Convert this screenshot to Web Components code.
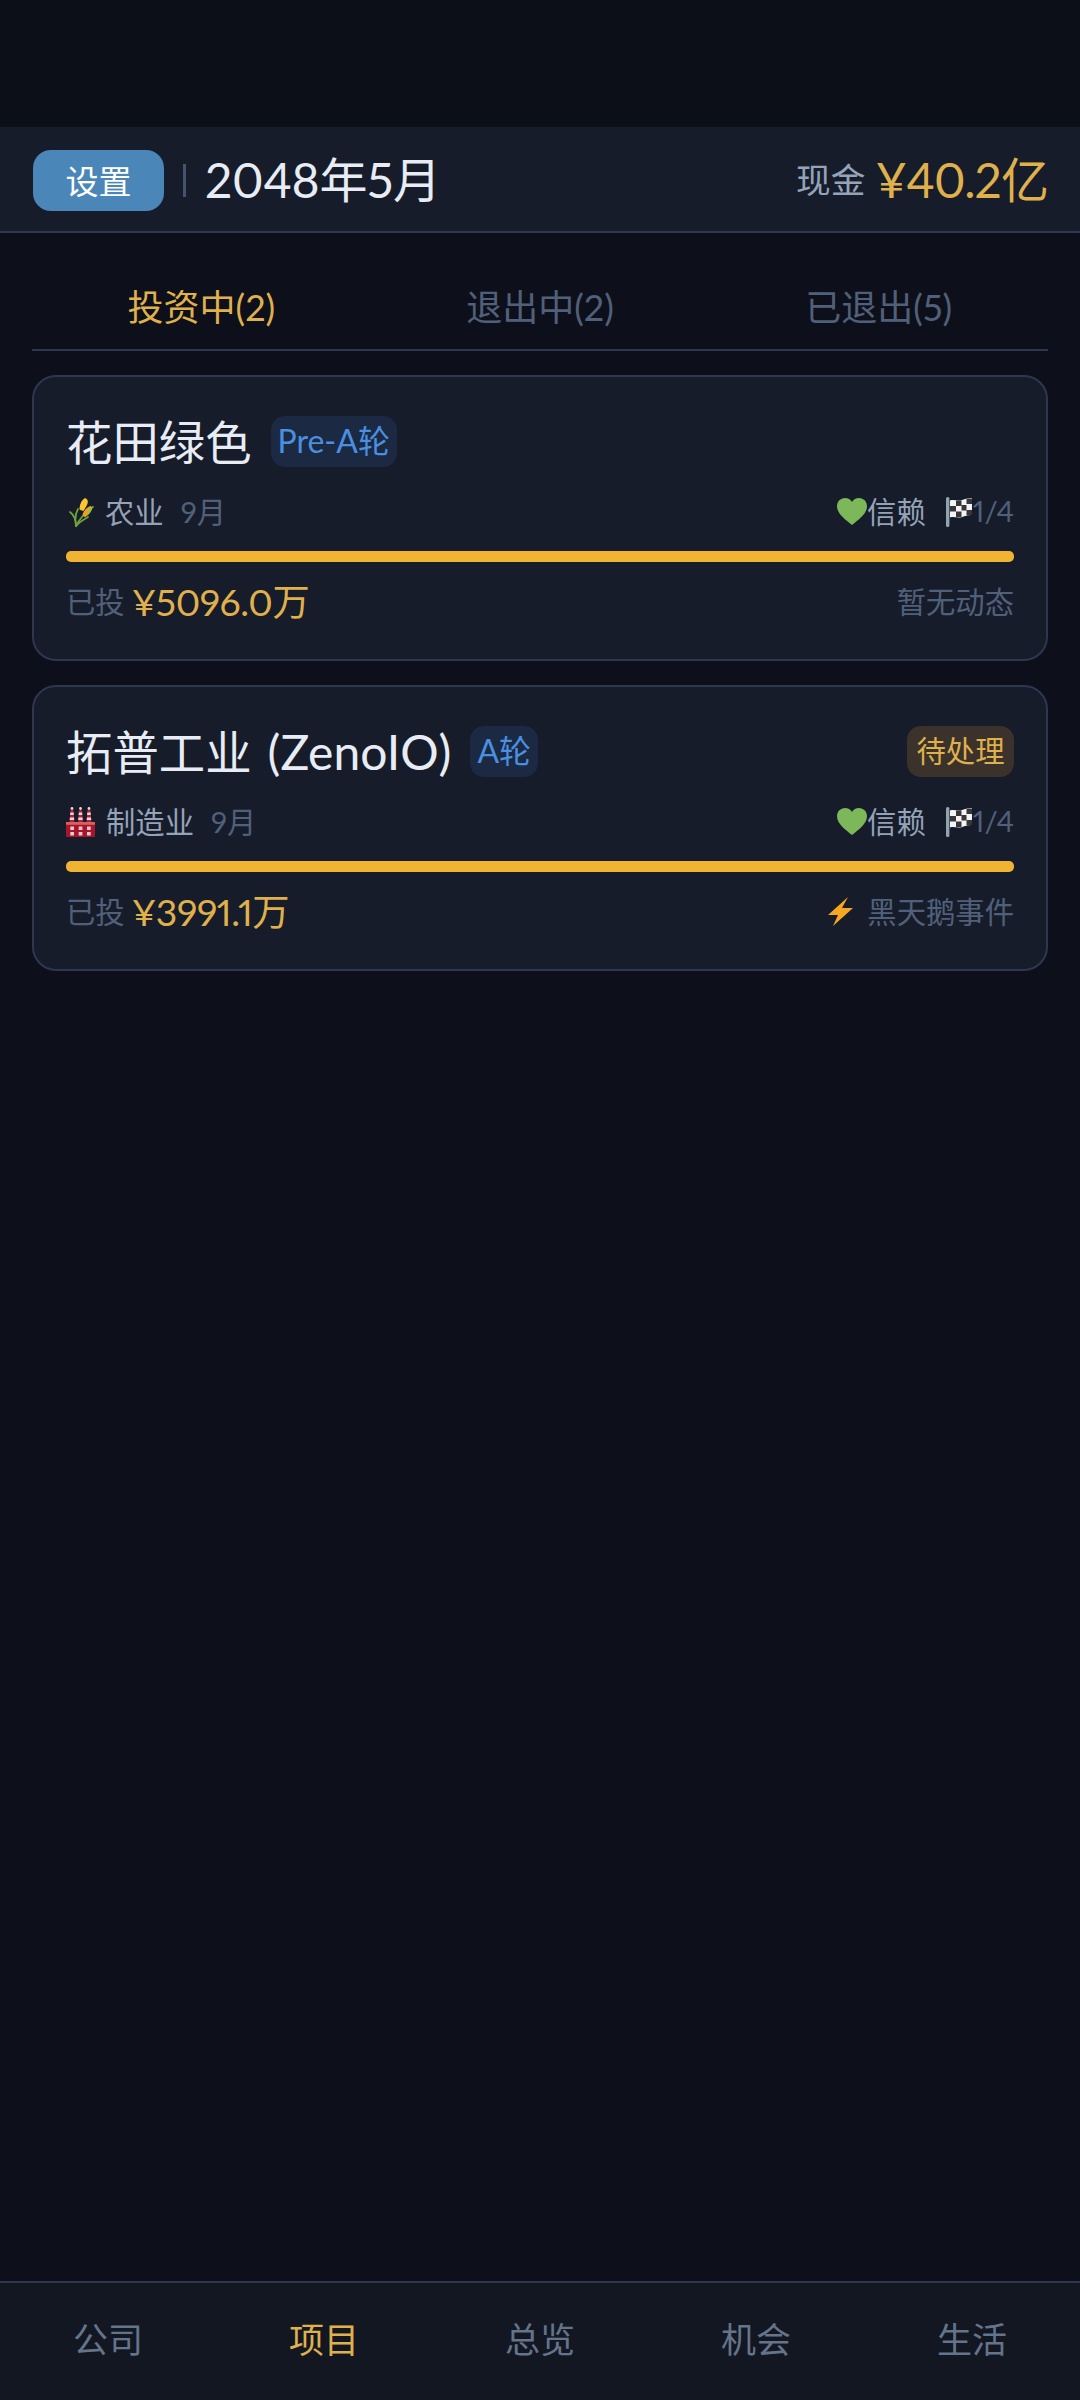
<!DOCTYPE html>
<html lang="zh-CN"><head><meta charset="utf-8"><title>项目</title>
<style>
html,body{margin:0;background:#0d101a;}
body{font-family:Lato,"Noto Sans CJK SC",sans-serif;}
x-app{width:1080px;height:2400px;}
</style></head><body>
<x-app>
  <x-header slot="header" date="2048年5月" cash="¥40.2亿"></x-header>
  <x-tabs slot="tabs" items="投资中(2),退出中(2),已退出(5)" active="0"></x-tabs>
  <x-card name="花田绿色" round="Pre-A轮" icon="corn" industry="农业" months="9月" amount="¥5096.0万" note="暂无动态"></x-card>
  <x-card name="拓普工业" latin="(ZenoIO)" round="A轮" pending="待处理" icon="factory" industry="制造业" months="9月" amount="¥3991.1万" note="黑天鹅事件" bolt></x-card>
  <x-nav slot="nav" items="公司,项目,总览,机会,生活" active="1"></x-nav>
</x-app>
<script>
const ICONS={
corn:`<svg width="28" height="30" viewBox="-4 0 28 30"><g fill="none" stroke="#6fa53a" stroke-width="1.700" stroke-linecap="round"><path d="M6 29C6 23 4 18 0 15"/><path d="M6 29C5 23 5 17 8 12"/><path d="M6 29C9 23 13 17 23 10"/><path d="M6 29C9 25 13 23 18 20"/></g><path d="M15 1c3 1 3.500 4 2 7l-3.500 6c-2-.5-3.500-1-4-2 0-4 2-9 5.500-11z" fill="#fbc531"/><path d="M21 9c1.500 2 1 4-.5 6l-5 5c-1.500 0-2.500-1-3-2 1-4 4-8 8.500-9z" fill="#f0a020"/><path d="M23 9l-3 7-3 3 2-7z" fill="#8bc34a"/></svg>`,
factory:`<svg width="29" height="30" viewBox="0 0 29 30"><g fill="#e8d5d5"><circle cx="6" cy="1.500" r="1.400"/><circle cx="14.500" cy="1.500" r="1.400"/><circle cx="23" cy="1.500" r="1.400"/></g><path d="M4.500 3h3l1 13h-5zM13 3h3l1 13h-5zM21.500 3h3l1 13h-5z" fill="#b5203a"/><path d="M4.300 5.500h3.400v2.400H4.100zM3.900 10.500h4.200v2.400H3.700zM12.800 5.500h3.400v2.400h-3.600zM12.400 10.500h4.200v2.400h-4.400zM21.300 5.500h3.400v2.400h-3.600zM20.900 10.500h4.200v2.400h-4.400z" fill="#eed7d7"/><rect x="0" y="15" width="29" height="15" rx="1" fill="#a8142c"/><rect x="0" y="15" width="29" height="2.800" fill="#d8605f"/><g fill="#eec9c9"><rect x="4.300" y="19.500" width="3.700" height="3.500"/><rect x="12.700" y="19.500" width="3.700" height="3.500"/><rect x="21" y="19.500" width="3.700" height="3.500"/><rect x="4.300" y="25" width="3.700" height="3.500"/><rect x="12.700" y="25" width="3.700" height="3.500"/><rect x="21" y="25" width="3.700" height="3.500"/></g></svg>`,
heart:`<svg width="30" height="27" viewBox="0 0 30 27"><path d="M15 27C9 22 0 16 0 8.200 0 3.600 3.500 0 8 0c3 0 5.600 1.600 7 4 1.400-2.400 4-4 7-4 4.500 0 8 3.600 8 8.200C30 16 21 22 15 27z" fill="#7cb85a"/></svg>`,
flag:`<svg width="26" height="30" viewBox="0 0 26 30"><rect x="0" y="0" width="3.400" height="30" rx="1.500" fill="#90a4ae"/><path d="M4 3.500C8 2 12 4.500 16 3c3-1 5-2 10-2v17c-5 0-7 1-10 2-4 1.500-8-1-12 .5z" fill="#f4f4f4"/><g fill="#37373b"><rect x="10" y="3.500" width="5.500" height="5.500"/><rect x="20.500" y="1.500" width="5.500" height="5.500"/><rect x="4" y="9" width="6" height="5.500"/><rect x="15.500" y="8" width="5" height="5.500"/><rect x="10" y="14.500" width="5.500" height="5.500"/><rect x="20.500" y="13" width="5.500" height="5"/></g></svg>`,
bolt:`<svg width="25" height="29" viewBox="0 0 25 29"><path d="M20 0L0 18h10L5 29 25 11H14z" fill="#f5a623"/></svg>`
};
class Base extends HTMLElement{
  constructor(){super();this.attachShadow({mode:'open'});}
  connectedCallback(){this.shadowRoot.innerHTML=this.render();}
}
customElements.define('x-app',class extends Base{render(){return `<style>
:host{display:flex;flex-direction:column;background:#0d101a;color:#e8ecf4;font-family:Lato,"Noto Sans CJK SC",sans-serif;font-variant-numeric:proportional-nums;}
.status{height:127px;background:#0c0f18;flex:none}
main{flex:1;display:flex;flex-direction:column;gap:24px;padding:0 32px;}
.nav{flex:none}
</style><div class="status"></div><slot name="header"></slot><main><slot name="tabs"></slot><slot></slot></main><div class="nav"><slot name="nav"></slot></div>`}});
customElements.define('x-header',class extends Base{render(){return `<style>
:host{display:flex;align-items:center;height:106px;box-sizing:border-box;border-bottom:2px solid #2f3650;background:#161c2a;padding:0 32px 0 33px;}
button{all:unset;width:131px;height:61px;border-radius:18px;background:#4a86b8;color:#fff;font-size:33px;text-align:center;line-height:58px;margin-top:3px}
.div{width:3px;height:33px;background:#46536d;margin:2px 19px 0 19px;}
.date{font-size:48px;color:#e8ecf4;line-height:60px;margin-top:2px;letter-spacing:-.3px}
.cash{margin-left:auto;display:flex;align-items:center;gap:10px;line-height:60px;margin-top:2px}
.l{font-size:34.670px;color:#94a3b8;}
.v{font-size:48px;color:#dfb04c;letter-spacing:-.9px}
</style><button>设置</button><span class="div"></span><span class="date">${this.getAttribute('date')}</span><span class="cash"><span class="l">现金</span><span class="v">${this.getAttribute('cash')}</span></span>`}});
customElements.define('x-tabs',class extends Base{render(){const a=+this.getAttribute('active');return `<style>
:host{display:flex;height:118px;box-sizing:border-box;border-bottom:2px solid #2f3650;}
span{flex:1;text-align:center;font-size:36px;line-height:44px;padding-top:52px;color:#51607a;}
.on{color:#dfb04c}
</style>`+this.getAttribute('items').split(',').map((t,i)=>`<span class="${i==a?'on':''}">${t}</span>`).join('')}});
customElements.define('x-card',class extends Base{render(){const g=n=>this.getAttribute(n);return `<style>
:host{display:block;box-sizing:border-box;height:286px;border:2px solid #2f3650;border-radius:24px;background:#161c2a;padding:39px 32px 0;}
.top{display:flex;align-items:center;height:52px;}
.name{font-size:46.400px;color:#e8ecf4;line-height:52px;white-space:nowrap;}
.lat{font-size:48px;margin-left:16px}
.badge{margin:-2px 0 0 19px;height:51px;line-height:50px;border-radius:14px;background:#1b2942;color:#4a8fe0;font-size:32px;padding:0 7px;}
.pend{margin:-2px 0 0 auto;height:51px;line-height:50px;border-radius:14px;background:#3b322b;color:#dfb04c;font-size:29.33px;padding:0 9.500px;}
.row{display:flex;align-items:center;height:40px;margin-top:22px;font-size:29.33px;}
.row svg{flex:none;display:block;margin-top:3px}
.ind{color:#94a3b8;margin-left:11px}
.mon{color:#51607a;margin-left:17px}
.trust{margin-left:auto;color:#94a3b8;display:flex;align-items:center;}
.goal{display:flex;align-items:center;color:#51607a;margin-left:20px;gap:1px;}
.bar{height:10.500px;margin-top:21px;border-radius:5px;background:#f0b432;}
.foot{display:flex;align-items:center;justify-content:space-between;margin-top:18px;height:44px}
.inv{display:flex;align-items:center;font-size:29.33px;color:#51607a;line-height:44px}
.inv b{font-weight:400;font-size:37.300px;color:#dfb04c;margin-left:7px;letter-spacing:-.4px}
.note{font-size:29.33px;color:#51607a;display:flex;align-items:center;gap:14px;line-height:44px}
</style>
<div class="top"><span class="name">${g('name')}${g('latin')?`<span class="lat">${g('latin')}</span>`:''}</span><span class="badge">${g('round')}</span>${g('pending')?`<span class="pend">${g('pending')}</span>`:''}</div>
<div class="row">${ICONS[g('icon')]}<span class="ind">${g('industry')}</span><span class="mon">${g('months')}</span><span class="trust">${ICONS.heart}信赖</span><span class="goal">${ICONS.flag}1/4</span></div>
<div class="bar"></div>
<div class="foot"><span class="inv">已投<b>${g('amount')}</b></span><span class="note">${this.hasAttribute('bolt')?ICONS.bolt:''}${g('note')}</span></div>`}});
customElements.define('x-nav',class extends Base{render(){const a=+this.getAttribute('active');return `<style>
:host{display:flex;height:119px;box-sizing:border-box;border-top:2px solid #2f3650;background:#131722;}
span{flex:1;text-align:center;font-size:35px;line-height:44px;padding-top:34px;color:#64748b;}
.on{color:#dfb04c}
</style>`+this.getAttribute('items').split(',').map((t,i)=>`<span class="${i==a?'on':''}">${t}</span>`).join('')}});
</script></body></html>
